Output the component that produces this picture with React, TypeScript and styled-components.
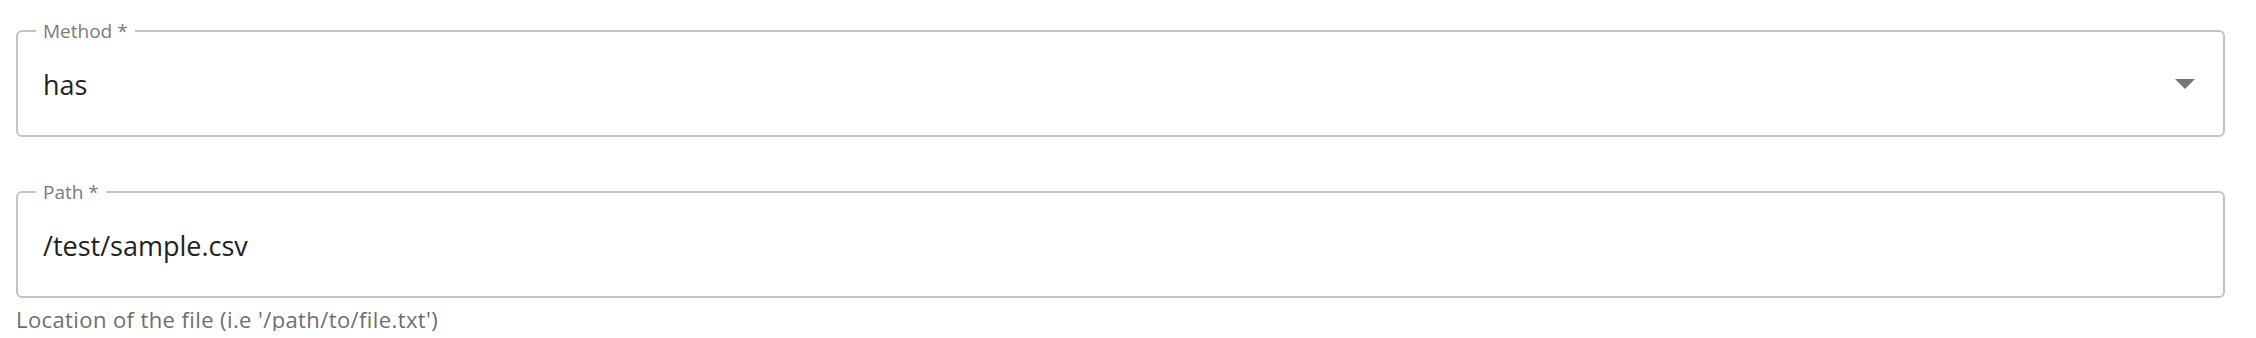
import styled, { createGlobalStyle } from "styled-components";

const GlobalStyle = createGlobalStyle`
  html, body {
    margin: 0;
    padding: 0;
    background: #ffffff;
  }
  body {
    font-family: "Open Sans", "Noto Sans", sans-serif;
  }
`;

const Form = styled.form`
  display: flex;
  flex-direction: column;
  gap: 54px;
  padding: 30px 31px 0 16px;
`;

const Field = styled.div`
  display: flex;
  flex-direction: column;
`;

const Outline = styled.div`
  position: relative;
  box-sizing: border-box;
  height: 107px;
  border: 2px solid #c4c4c4;
  border-radius: 6px;
  display: flex;
  align-items: center;
  justify-content: space-between;
  padding: 0 28px 0 25px;
`;

const Label = styled.label`
  position: absolute;
  top: -13px;
  left: 18px;
  padding: 0 7px;
  background: #ffffff;
  color: #7a7a7a;
  font-size: 19px;
  line-height: 24px;
`;

const Value = styled.span`
  color: #222222;
  font-size: 27px;
  line-height: 36px;
  padding-top: 2px;
`;

const Helper = styled.p`
  margin: 9px 0 0;
  color: #6e6e6e;
  font-size: 22px;
  letter-spacing: 0.4px;
  line-height: 24px;
`;

const Arrow = () => (
  <svg width="20" height="10" viewBox="0 0 20 10" aria-hidden="true">
    <path d="M0 0L10 10L20 0Z" fill="#767676" />
  </svg>
);

export default function App() {
  return (
    <>
      <GlobalStyle />
      <Form>
        <Field>
          <Outline>
            <Label>Method *</Label>
            <Value>has</Value>
            <Arrow />
          </Outline>
        </Field>
        <Field>
          <Outline>
            <Label>Path *</Label>
            <Value>/test/sample.csv</Value>
          </Outline>
          <Helper>Location of the file (i.e '/path/to/file.txt')</Helper>
        </Field>
      </Form>
    </>
  );
}
